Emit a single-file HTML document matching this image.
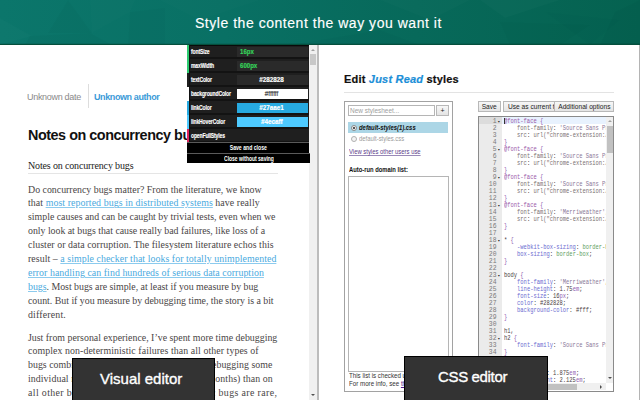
<!DOCTYPE html>
<html><head><meta charset="utf-8">
<style>
*{box-sizing:border-box;margin:0;padding:0}
html,body{width:640px;height:400px;overflow:hidden;background:#fff;font-family:"Liberation Sans",sans-serif;position:relative}
.abs{position:absolute}
#hdr{left:0;top:0;width:640px;height:45px;background:linear-gradient(90deg,#0b766b 0%,#097064 35%,#07695a 65%,#056250 100%);overflow:hidden}
#hdr .shadow{left:0;top:44px;width:640px;height:1px;background:#054f3c}
#title{left:195px;top:15px;color:#fff;font-size:14px;line-height:16px;white-space:nowrap;letter-spacing:0.53px;-webkit-text-stroke:0.15px #fff}
/* left article */
#left{left:0;top:45px;width:318px;height:355px;overflow:hidden;background:#fff}
#vline{left:317px;top:45px;width:2px;height:355px;background:#bcbcbc}
.meta{font-size:9px;color:#8a8a8a;white-space:nowrap;letter-spacing:-0.3px}
.auth{font-size:9px;color:#3b9ad8;font-weight:bold;white-space:nowrap;letter-spacing:-0.4px}
.h1{font-size:14.4px;font-weight:bold;color:#111;white-space:nowrap;letter-spacing:-0.47px}
.serif{font-family:"Liberation Serif",serif;color:#4a4646;white-space:nowrap}
.p{font-size:9.9px;line-height:13.9px}
.lnk{color:#4aaae0;text-decoration:underline;text-decoration-color:#8ccbee;text-decoration-thickness:1px}
/* panel */
#panel{left:187px;top:45px;width:122px;height:118px;background:#1d1d1d}
.row{position:absolute;left:0;width:122px;height:14px;border-bottom:2px solid #131313;background:#1f1f1f}
.lab{position:absolute;left:4px;top:3px;font-size:7px;line-height:8px;font-weight:bold;color:#fff;white-space:nowrap;letter-spacing:-0.2px;-webkit-text-stroke:0.15px #fff}
.val{position:absolute;left:50px;top:2px;width:71px;height:10px;background:#2a2a2a;font-size:8px;line-height:10.5px;font-weight:bold;text-align:center;white-space:nowrap;padding-right:2px;-webkit-text-stroke:0.2px currentColor}
.sx{display:inline-block;transform:scaleX(.72);transform-origin:0 50%}
.sxc{display:inline-block;transform:scaleX(.79);transform-origin:50% 50%}
.sxb{display:inline-block;transform-origin:50% 50%}
.btn2{background:#000;border-top:1px solid #5a5a5a;color:#fff;font-size:7px;font-weight:bold;text-align:center;line-height:9px;white-space:nowrap}
.bar{position:absolute;left:0;top:0;width:2px;height:14px}
.sxv{display:inline-block;transform:scaleX(.76);transform-origin:0 50%}
/* right */
#right{left:319px;top:45px;width:321px;height:355px;background:#fff}
.box{border:1px solid #a2a2a2}
.t7{font-size:7.2px;line-height:8px;white-space:nowrap}
.s82{display:inline-block;transform:scaleX(.82);transform-origin:0 50%}
.s85{display:inline-block;transform:scaleX(.85);transform-origin:0 50%}
.btn{position:absolute;background:linear-gradient(#f7f7f7,#e4e4e4);border:1px solid #b8b8b8;font-size:7.2px;color:#222;text-align:center;line-height:9.5px;white-space:nowrap;overflow:hidden}
.s92{display:inline-block;transform:scaleX(.92);transform-origin:0 50%}
.s92c{display:inline-block;transform:scaleX(.92);transform-origin:50% 50%}
.ca{color:#9a58a8}.cp{color:#9060b0}.cg{color:#7a7070}.cs{color:#8a7898}.ck{color:#4a4040}.cb{color:#6a6ad0}.ce{color:#62a062}
.code{font-family:"Liberation Mono",monospace;font-size:6.4px;line-height:7px;white-space:pre;color:#333;transform:scaleX(.852);transform-origin:0 0}
.gut{font-family:"Liberation Mono",monospace;font-size:6.4px;line-height:7px;white-space:pre;color:#7a7a7a;text-align:right}
.ov{background:#333;border:1px solid #000;color:#fff;font-size:15px;line-height:16px;white-space:nowrap;-webkit-text-stroke:0.35px #fff}
</style></head><body>
<div id="hdr" class="abs">
  <svg class="abs" style="left:0;top:0" width="640" height="45" viewBox="0 0 640 45">
    <polygon points="0,18 32,36 0,45" fill="#fff" fill-opacity="0.015"/>
    <polygon points="68,0 48,33 92,33" fill="#000" fill-opacity="0.021"/>
    <polygon points="25,45 30,36 90,33 112,45" fill="#000" fill-opacity="0.024"/>
    <polygon points="90,0 135,0 130,12 92,33" fill="#fff" fill-opacity="0.012"/>
    <polygon points="130,12 165,8 165,45 128,45" fill="#000" fill-opacity="0.021"/>
    <polygon points="160,0 260,0 200,20" fill="#fff" fill-opacity="0.012"/>
    <polygon points="290,45 380,30 420,45" fill="#000" fill-opacity="0.018"/>
    <polygon points="380,0 470,0 430,20" fill="#fff" fill-opacity="0.015"/>
    <polygon points="480,0 560,0 505,18" fill="#fff" fill-opacity="0.018"/>
    <polygon points="500,22 590,25 560,45 510,45" fill="#000" fill-opacity="0.021"/>
    <polygon points="615,12 640,0 640,45 600,45" fill="#000" fill-opacity="0.024"/>
    <polygon points="545,12 620,20 590,45" fill="#000" fill-opacity="0.012"/>
  </svg>
  <div class="abs shadow"></div>
  <div class="abs" style="left:0;top:43px;width:640px;height:1px;background:#000;opacity:0.08"></div>
  <div id="title" class="abs">Style the content the way you want it</div>
</div>

<div id="left" class="abs">
  <div class="abs meta" style="left:27px;top:47px">Unknown date</div>
  <div class="abs" style="left:88px;top:39px;width:1px;height:24px;background:#ddd"></div>
  <div class="abs auth" style="left:94px;top:47px">Unknown author</div>
  <div class="abs h1" style="left:28px;top:82px">Notes on concurrency bugs</div>
  <div class="abs serif" style="left:28px;top:115px;font-size:10px;letter-spacing:-0.15px;color:#222">Notes on concurrency bugs</div>
  <div class="abs" style="left:28px;top:128px;width:250px;height:1px;background:#e5e5e5"></div>
  <div class="abs serif p" style="left:28px;top:137.5px;letter-spacing:-0.005px">Do concurrency bugs matter? From the literature, we know</div>
  <div class="abs serif p" style="left:28px;top:151.4px;letter-spacing:0.070px">that <span class="lnk">most reported bugs in distributed systems</span> have really</div>
  <div class="abs serif p" style="left:28px;top:165.3px;letter-spacing:-0.008px">simple causes and can be caught by trivial tests, even when we</div>
  <div class="abs serif p" style="left:28px;top:179.2px;letter-spacing:-0.029px">only look at bugs that cause really bad failures, like loss of a</div>
  <div class="abs serif p" style="left:28px;top:193.1px;letter-spacing:0.048px">cluster or data corruption. The filesystem literature echos this</div>
  <div class="abs serif p" style="left:28px;top:207.0px;letter-spacing:0.056px">result – <span class="lnk">a simple checker that looks for totally unimplemented</span></div>
  <div class="abs serif p" style="left:28px;top:220.9px;letter-spacing:0.048px"><span class="lnk">error handling can find hundreds of serious data corruption</span></div>
  <div class="abs serif p" style="left:28px;top:234.8px;letter-spacing:-0.026px"><span class="lnk">bugs</span>. Most bugs are simple, at least if you measure by bug</div>
  <div class="abs serif p" style="left:28px;top:248.7px;letter-spacing:-0.020px">count. But if you measure by debugging time, the story is a bit</div>
  <div class="abs serif p" style="left:28px;top:262.6px;letter-spacing:0.167px">different.</div>
  <div class="abs serif p" style="left:28px;top:285.5px;letter-spacing:0.000px">Just from personal experience, I’ve spent more time debugging</div>
  <div class="abs serif p" style="left:28px;top:299.4px;letter-spacing:0.067px">complex non-deterministic failures than all other types of</div>
  <div class="abs serif p" style="left:28px;top:313.3px;letter-spacing:0.016px">bugs combined. In fact, I've spent more time debugging some</div>
  <div class="abs serif p" style="left:28px;top:327.2px;letter-spacing:0.062px">individual non-deterministic bugs (weeks or months) than on</div>
  <div class="abs serif p" style="left:28px;top:341.1px;letter-spacing:0.375px">all other bugs combined. Non-deterministic bugs are rare,</div>
  <!-- scrollbar -->
  <div class="abs" style="left:309px;top:0;width:8px;height:355px;background:#f0f0f0"></div>
  <div class="abs" style="left:310px;top:9px;width:6px;height:11px;background:#c8c8c8"></div>
  <div class="abs" style="left:311px;top:4px;width:0;height:0;border-left:2px solid transparent;border-right:2px solid transparent;border-bottom:2px solid #a0a0a0"></div>
  <div class="abs" style="left:311px;top:349px;width:0;height:0;border-left:2px solid transparent;border-right:2px solid transparent;border-top:2px solid #505050"></div>
</div>
<div id="vline" class="abs"></div>
<div id="panel" class="abs">
  <div class="row" style="top:0"><div class="bar" style="background:#2ecc71"></div><div class="lab"><span class="sx">fontSize</span></div><div class="val" style="color:#36d45a;text-align:left;padding-left:2.5px"><span class="sxv">16px</span></div></div>
  <div class="row" style="top:14px"><div class="bar" style="background:#2ecc71"></div><div class="lab"><span class="sx">maxWidth</span></div><div class="val" style="color:#36d45a;text-align:left;padding-left:2.5px"><span class="sxv">600px</span></div></div>
  <div class="row" style="top:28px"><div class="bar" style="background:#1e1e1e"></div><div class="lab"><span class="sx">textColor</span></div><div class="val" style="color:#fff"><span class="sxc">#282828</span></div></div>
  <div class="row" style="top:42px"><div class="bar" style="background:#fff"></div><div class="lab"><span class="sx">backgroundColor</span></div><div class="val" style="color:#444;background:#fff;font-weight:normal"><span class="sxc">#ffffff</span></div></div>
  <div class="row" style="top:56px"><div class="bar" style="background:#27aae1"></div><div class="lab"><span class="sx">linkColor</span></div><div class="val" style="color:#fff;background:#27aae1"><span class="sxc">#27aae1</span></div></div>
  <div class="row" style="top:70px"><div class="bar" style="background:#4ecaff"></div><div class="lab"><span class="sx">linkHoverColor</span></div><div class="val" style="color:#fff;background:#4ecaff"><span class="sxc">#4ecaff</span></div></div>
  <div class="row" style="top:84px"><div class="bar" style="background:#e0245e"></div><div class="lab"><span class="sx">openFullStyles</span></div></div>
  <div class="abs" style="left:2px;top:0;width:120px;height:1px;background:#0a0a0a"></div>
  <div class="abs" style="left:2px;top:0;width:1px;height:98px;background:#111"></div>
  <div class="abs btn2" style="left:0;top:97px;width:122px;height:11px"><span class="sxb" style="transform:scaleX(.735)">Save and close</span></div>
  <div class="abs btn2" style="left:0;top:108px;width:123px;height:10px;font-size:6.6px"><span class="sxb" style="transform:scaleX(.755)">Close without saving</span></div>
</div>
<div id="right" class="abs">
  <div class="abs" style="left:25px;top:28px;font-size:11px;font-weight:bold;color:#111;white-space:nowrap;letter-spacing:0.2px;-webkit-text-stroke:0.2px currentColor">Edit <i style="color:#1b8fd8">Just Read</i> styles</div>
  <div class="abs" style="left:25px;top:47px;width:270px;height:1px;background:#e3e3e3"></div>
  <!-- left box -->
  <div class="abs box" style="left:25px;top:56px;width:109px;height:291px"></div>
  <div class="abs" style="left:29px;top:60px;width:87px;height:11px;border:1px solid #b5b5b5;background:#fff"></div>
  <div class="abs t7" style="left:30.5px;top:62px;color:#a0a0a0"><span class="s82" style="transform:scaleX(.9)">New stylesheet...</span></div>
  <div class="btn" style="left:117px;top:60px;width:13px;height:11px;font-size:7px;line-height:9.5px">+</div>
  <div class="abs" style="left:29px;top:77px;width:100px;height:11px;background:#acd6e6"></div>
  <div class="abs" style="left:31.5px;top:80px;width:6px;height:6px;border-radius:50%;border:1px solid #8a8a8a;background:#f0f0f0"></div>
  <div class="abs" style="left:33.5px;top:82px;width:2px;height:2px;border-radius:50%;background:#222"></div>
  <div class="abs t7" style="left:40px;top:79px;color:#111"><span class="s82" style="font-weight:bold;font-style:italic">default-styles(1).css</span></div>
  <div class="abs" style="left:31.5px;top:91px;width:6px;height:6px;border-radius:50%;border:1px solid #b0b0b0;background:#f4f4f4"></div>
  <div class="abs t7" style="left:40px;top:89.5px;color:#9a9a9a"><span class="s82">default-styles.css</span></div>
  <div class="abs t7" style="left:29.5px;top:103px;color:#5a3a8a"><span class="s82" style="text-decoration:underline;text-decoration-color:#9a8ab8">View styles other users use</span></div>
  <div class="abs t7" style="left:29.5px;top:121px;font-weight:bold;color:#111"><span class="s85" style="transform:scaleX(.81)">Auto-run domain list:</span></div>
  <div class="abs" style="left:29px;top:131px;width:101px;height:196px;border:1px solid #b5b5b5;background:#fff"></div>
  <div class="abs t7" style="left:29.5px;top:327px;color:#333;line-height:7.7px"><span class="s82" style="transform:scaleX(.86)">This list is checked upon page load.<br>For more info, see <span style="color:#551a8b;text-decoration:underline">this</span></span></div>
  <!-- right buttons -->
  <div class="btn" style="left:159px;top:56px;width:23px;height:10.5px"><span class="s92c">Save</span></div>
  <div class="btn" style="left:184px;top:56px;width:52px;height:10.5px;text-align:left;padding-left:3.5px"><span class="s92">Use as current theme</span></div>
  <div class="btn" style="left:235px;top:56px;width:60px;height:10.5px"><span class="s92c">Additional options</span></div>
  <!-- editor -->
  <div class="abs" style="left:159px;top:71px;width:136px;height:276px;border:1px solid #8a8a8a;background:#fff;overflow:hidden">
    <div class="abs" style="left:0;top:0;width:23px;height:276px;background:#ebebeb"></div>
    <div class="abs" style="left:0;top:0;width:23px;height:7px;background:#dcdcdc"></div>
    <div class="abs" style="left:23px;top:0;width:104px;height:7px;background:#e8f2fe"></div>
    <div class="abs gut" style="left:0;top:0.5px;width:17.5px">1
2
3
4
5
6
7
8
9
10
11
12
13
14
15
16
17
18
19
20
21
22
23
24
25
26
27
28
29
30
31
32
33
34
35
36
37
38
39</div>
    <div class="abs gut" style="left:18.5px;top:0.5px;width:5px;text-align:left;font-size:4.5px;color:#222">▾
 
 
 
▾
 
 
 
▾
 
 
 
▾
 
 
 
 
▾
 
 
 
 
▾
 
 
 
 
 
 
 
 
▾
 
 
 
▾
 
 
 </div>
    <div class="abs code" style="left:25px;top:0.5px"><span class="ca">@font-face</span> <span class="cp">{</span>
    <span class="cg">font-family</span>: <span class="cs">'Source Sans Pro'</span>;
    <span class="cg">src</span>: <span class="cg">url("chrome-extension://</span>
<span class="cp">}</span>
<span class="ca">@font-face</span> <span class="cp">{</span>
    <span class="cg">font-family</span>: <span class="cs">'Source Sans Pro'</span>;
    <span class="cg">src</span>: <span class="cg">url("chrome-extension://</span>
<span class="cp">}</span>
<span class="ca">@font-face</span> <span class="cp">{</span>
    <span class="cg">font-family</span>: <span class="cs">'Source Sans Pro'</span>;
    <span class="cg">src</span>: <span class="cg">url("chrome-extension://</span>
<span class="cp">}</span>
<span class="ca">@font-face</span> <span class="cp">{</span>
    <span class="cg">font-family</span>: <span class="cs">'Merriweather'</span>;
    <span class="cg">src</span>: <span class="cg">url("chrome-extension://</span>
<span class="cp">}</span>
 
<span class="ck">*</span> <span class="cp">{</span>
    <span class="cb">-webkit-box-sizing</span>: <span class="ce">border-box</span>;
    <span class="cb">box-sizing</span>: <span class="ce">border-box</span>;
<span class="cp">}</span>
 
<span class="ck">body</span> <span class="cp">{</span>
    <span class="cb">font-family</span>: <span class="cs">'Merriweather'</span>, serif;
    <span class="cb">line-height</span>: <span class="ck">1.75</span><span class="cp">em</span>;
    <span class="cb">font-size</span>: <span class="ck">16</span><span class="cp">px</span>;
    <span class="cb">color</span>: <span class="ck">#282828</span>;
    <span class="cb">background-color</span>: <span class="ck">#fff</span>;
<span class="cp">}</span>
 
<span class="ck">h1</span>,
<span class="ck">h2</span> <span class="cp">{</span>
    <span class="cb">font-family</span>: <span class="cs">'Source Sans Pro'</span>;
<span class="cp">}</span>
 
<span class="ck">h1</span> <span class="cp">{</span>
    <span class="cb">font-size</span>: <span class="ck">1.875</span><span class="cp">em</span>;
    <span class="cb">line-height</span>: <span class="ck">2.125</span><span class="cp">em</span>;
    <span class="cb">margin</span>: <span class="ck">0</span>;</div>
    <div class="abs" style="left:25px;top:1px;width:1px;height:6px;background:#333"></div>
    <!-- v scrollbar -->
    <div class="abs" style="left:127px;top:0;width:7px;height:266px;background:#f0f0f0"></div>
    <div class="abs" style="left:128px;top:9px;width:6px;height:27px;background:#c1c1c1"></div>
    <div class="abs" style="left:128.5px;top:3px;width:0;height:0;border-left:2.5px solid transparent;border-right:2.5px solid transparent;border-bottom:2.5px solid #a3a3a3"></div>
    <div class="abs" style="left:128.5px;top:260px;width:0;height:0;border-left:2.5px solid transparent;border-right:2.5px solid transparent;border-top:2.5px solid #505050"></div>
    <!-- h scrollbar -->
    <div class="abs" style="left:0;top:266px;width:127px;height:7px;background:#f0f0f0"></div>
    <div class="abs" style="left:50px;top:267px;width:48px;height:6px;background:#c1c1c1"></div>
    <div class="abs" style="left:121px;top:267.5px;width:0;height:0;border-top:2.5px solid transparent;border-bottom:2.5px solid transparent;border-left:2.5px solid #505050"></div>
  </div>
</div>
<div class="abs" style="left:639px;top:45px;width:1px;height:355px;background:#b4b4b4"></div>
<div class="abs ov" style="left:72px;top:358px;width:143px;height:50px"><span class="abs" style="left:27px;top:12px">Visual editor</span></div>
<div class="abs ov" style="left:404px;top:356px;width:144px;height:50px"><span class="abs" style="left:33px;top:12px;letter-spacing:-0.35px">CSS editor</span></div>
</body></html>
